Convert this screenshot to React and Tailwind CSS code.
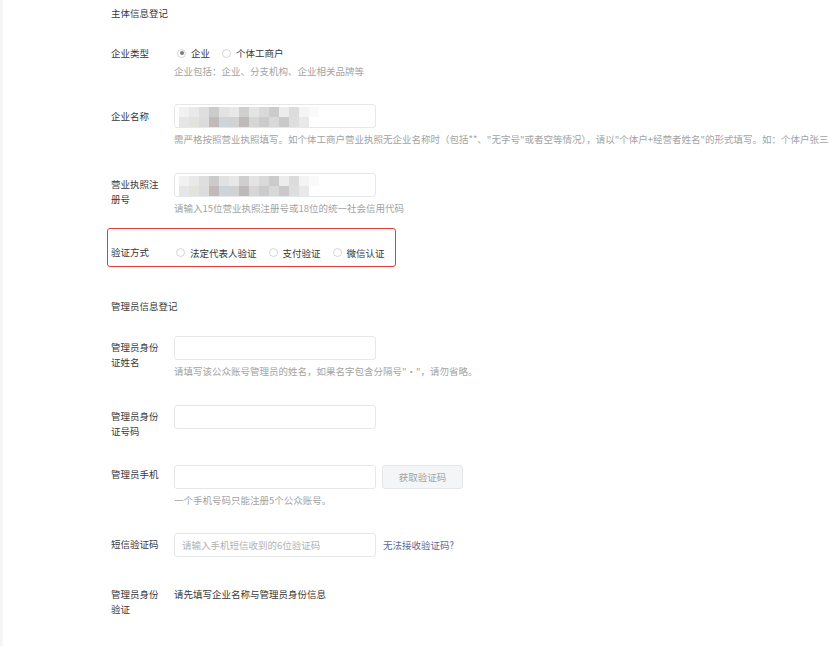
import React from 'react';

const mosaicTop = ['#f1f1f1', '#e9e9e9', '#dedede', '#cbcbcb', '#e2e2e2', '#e8e8e8', '#cfcfcf', '#e4e4e4', '#d9d9d9', '#cbcbcb', '#ececec', '#dcdcdc', '#f4f4f4', '#fafafa'];
const mosaicBottom = ['#e6e6e6', '#e3e3de', '#dcdcdc', '#c0baba', '#ced4d7', '#d2d2d2', '#bebaba', '#d6d6d6', '#cbcbcb', '#d8d8d8', '#c9c9c9', '#dedede', '#e9e9e9'];

const Mosaic = () => (
  <div className="absolute left-[4px] top-[2px] flex flex-col">
    <div className="flex">
      {mosaicTop.map((c, i) => (
        <div key={i} className="w-[10px] h-[10px]" style={{ background: c }} />
      ))}
    </div>
    <div className="flex">
      {mosaicBottom.map((c, i) => (
        <div key={i} className="w-[10px] h-[10px]" style={{ background: c }} />
      ))}
    </div>
  </div>
);

const Input = ({ placeholder, blurred }) => (
  <div className="relative shrink-0 w-[202px] h-[24px] border border-[#e4e8eb] rounded-[3px] bg-white flex items-center px-[7px] text-[#b2b2b2] whitespace-nowrap">
    {blurred && <Mosaic />}
    {placeholder}
  </div>
);

const Help = ({ children }) => (
  <div className="mt-[4px] leading-[14px] text-[#a3a3a3] whitespace-nowrap">{children}</div>
);

const Label = ({ children, pt = 'pt-[4px]' }) => (
  <div className={`w-[50px] mr-[13px] shrink-0 leading-[15px] text-[#383838] ${pt}`}>{children}</div>
);

const Radio = ({ checked, label }) => (
  <div className="flex items-center shrink-0 whitespace-nowrap mr-[12px]">
    <span className="w-[9px] h-[9px] rounded-full border border-[#d5d5d5] bg-white flex items-center justify-center mr-[5px]">
      {checked && <span className="w-[4px] h-[4px] rounded-full bg-[#7a7a7a]" />}
    </span>
    <span className="text-[#383838]">{label}</span>
  </div>
);

export default function App() {
  return (
    <div className="w-[831px] h-[646px] overflow-hidden bg-white flex font-['Noto_Sans_CJK_SC',sans-serif] text-[9.5px]">
      <div className="w-[3px] shrink-0 bg-[#f3f4f6]" />
      <div className="pl-[108px] pt-[6px] flex-1">
        <div className="leading-[14px] text-[#383838]">主体信息登记</div>

        <div className="mt-[26px] flex">
          <Label pt="pt-0">企业类型</Label>
          <div>
            <div className="flex leading-[14px] pl-[3px]">
              <Radio checked label="企业" />
              <Radio label="个体工商户" />
            </div>
            <Help>企业包括：企业、分支机构、企业相关品牌等</Help>
          </div>
        </div>

        <div className="mt-[26px] flex">
          <Label pt="pt-[5px]">企业名称</Label>
          <div>
            <Input blurred />
            <Help>需严格按照营业执照填写。如个体工商户营业执照无企业名称时（包括**、"无字号"或者空等情况），请以"个体户+经营者姓名"的形式填写。如：个体户张三</Help>
          </div>
        </div>

        <div className="mt-[27px] flex">
          <Label>营业执照注册号</Label>
          <div>
            <Input blurred />
            <Help>请输入15位营业执照注册号或18位的统一社会信用代码</Help>
          </div>
        </div>

        <div className="mt-[13px] ml-[-4px] w-[289px] border border-[#e23b3b] rounded-[3px] pl-[3px] pt-[16px] pb-[6px] flex leading-[14px]">
          <Label pt="pt-0">验证方式</Label>
          <div className="flex pl-[2px]">
            <Radio label="法定代表人验证" />
            <Radio label="支付验证" />
            <Radio label="微信认证" />
          </div>
        </div>

        <div className="mt-[32px] leading-[14px] text-[#383838]">管理员信息登记</div>

        <div className="mt-[23px] flex">
          <Label>管理员身份证姓名</Label>
          <div>
            <Input />
            <Help>请填写该公众账号管理员的姓名，如果名字包含分隔号"·"，请勿省略。</Help>
          </div>
        </div>

        <div className="mt-[27px] flex">
          <Label>管理员身份证号码</Label>
          <div>
            <Input />
          </div>
        </div>

        <div className="mt-[26px] flex">
          <Label pt="pt-[2px]">管理员手机</Label>
          <div>
            <div className="flex">
              <Input />
              <div className="ml-[6px] w-[81px] h-[24px] border border-[#e4e8eb] rounded-[3px] bg-[#f4f5f7] flex items-center justify-center text-[#a3a3a3]">
                获取验证码
              </div>
            </div>
            <Help>一个手机号码只能注册5个公众账号。</Help>
          </div>
        </div>

        <div className="mt-[26px] flex">
          <Label pt="pt-[4px]">短信验证码</Label>
          <div className="flex items-center">
            <Input placeholder="请输入手机短信收到的6位验证码" />
            <span className="ml-[7px] text-[#576b95] whitespace-nowrap">无法接收验证码?</span>
          </div>
        </div>

        <div className="mt-[30px] flex">
          <Label pt="pt-0">管理员身份验证</Label>
          <div className="leading-[15px] text-[#383838]">请先填写企业名称与管理员身份信息</div>
        </div>
      </div>
    </div>
  );
}
